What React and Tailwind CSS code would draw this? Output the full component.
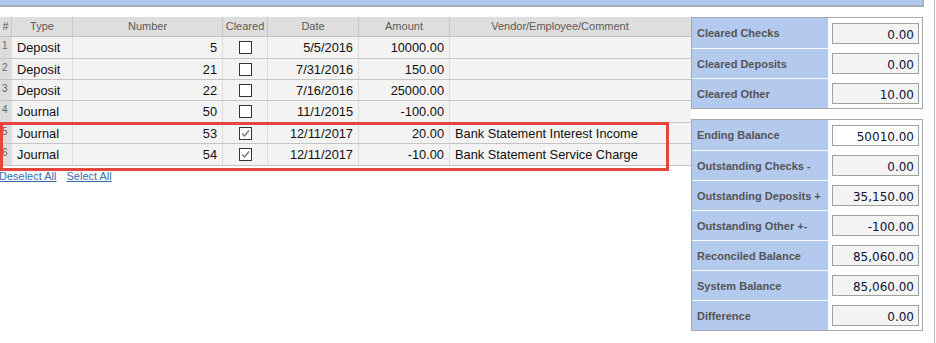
import React from 'react';

const rows = [
    { n: 1, type: 'Deposit', number: '5', cleared: false, date: '5/5/2016', amount: '10000.00', comment: '', h: 'h-[22px]' },
    { n: 2, type: 'Deposit', number: '21', cleared: false, date: '7/31/2016', amount: '150.00', comment: '', h: 'h-[21px]' },
    { n: 3, type: 'Deposit', number: '22', cleared: false, date: '7/16/2016', amount: '25000.00', comment: '', h: 'h-[21px]' },
    { n: 4, type: 'Journal', number: '50', cleared: false, date: '11/1/2015', amount: '-100.00', comment: '', h: 'h-[22px]' },
    { n: 5, type: 'Journal', number: '53', cleared: true, date: '12/11/2017', amount: '20.00', comment: 'Bank Statement Interest Income', h: 'h-[21px]' },
    { n: 6, type: 'Journal', number: '54', cleared: true, date: '12/11/2017', amount: '-10.00', comment: 'Bank Statement Service Charge', h: 'h-[22px]' },
];

const clearedTotals = [
    { label: 'Cleared Checks', value: '0.00' },
    { label: 'Cleared Deposits', value: '0.00' },
    { label: 'Cleared Other', value: '10.00' },
];

const balances = [
    { label: 'Ending Balance', value: '50010.00', editable: true },
    { label: 'Outstanding Checks -', value: '0.00' },
    { label: 'Outstanding Deposits +', value: '35,150.00' },
    { label: 'Outstanding Other +-', value: '-100.00' },
    { label: 'Reconciled Balance', value: '85,060.00' },
    { label: 'System Balance', value: '85,060.00' },
    { label: 'Difference', value: '0.00' },
];

const cols = 'grid grid-cols-[12px_61px_150px_45px_91px_91px_220px]';

const Checkbox = ({ checked }) => (
    <span className="inline-block w-[13px] h-[13px] border border-[#333] bg-white relative">
        {checked && (
            <svg viewBox="0 0 13 13" className="absolute -left-px -top-px w-[13px] h-[13px]">
                <path d="M3 6.5 L5.5 9 L10 3.5" fill="none" stroke="#777" strokeWidth="1.3" />
            </svg>
        )}
    </span>
);

const SummaryBox = ({ items }) => (
    <div className="border border-[#a3a9b0] bg-white">
        {items.map((item, i) => (
            <div key={item.label} className="flex h-[30px]">
                <div className={`w-[136px] bg-[#b3c9ee] pl-[5px] pt-[7px] text-[11px] font-bold text-[#555] ${i > 0 ? 'border-t border-white' : ''}`}>
                    {item.label}
                </div>
                <div className="flex-1 pl-[4px] pt-[5px]">
                    <div className={`w-[87px] h-[21px] border border-[#a0a0a0] pr-[4px] pt-[3px] text-right font-['DejaVu_Sans'] text-[12px] leading-[16px] text-[#10103a] ${item.editable ? 'bg-white' : 'bg-[#f4f4f4]'}`}>
                        {item.value}
                    </div>
                </div>
            </div>
        ))}
    </div>
);

const App = () => {
    return (
        <div className="w-[936px] h-[343px] overflow-hidden bg-white font-['Liberation_Sans',sans-serif]">
            <div className="w-[935px] h-[343px] border-r border-[#b8bcc2]">
                <div className="w-[924px] h-[7px] bg-[#b3c9ee] border-b-2 border-r-2 border-[#a8adb5]" />

                <div className="flex pt-[10px]">
                    <div className="w-[691px] relative">
                        <div className={`${cols} h-[20px] bg-[#dedede] text-[11px] text-[#5a5a5a] border-b border-[#c2c2c2]`}>
                            {['#', 'Type', 'Number', 'Cleared', 'Date', 'Amount', 'Vendor/Employee/Comment'].map((h, i) => (
                                <div key={h} className={`flex items-center justify-center ${i < 6 ? 'border-r border-[#c8c8c8]' : ''}`}>{h}</div>
                            ))}
                        </div>
                        {rows.map((r) => (
                            <div key={r.n} className={`${cols} ${r.h} bg-[#f3f3f3] border-b border-[#c4c4c4] text-[12.8px] text-[#111]`}>
                                <div className="bg-[#dcdcdc] text-[10px] text-[#666] pl-[2px] pt-[1px]">{r.n}</div>
                                <div className="flex items-center pl-[5px] pt-px border-r border-[#dcdcdc]">{r.type}</div>
                                <div className="flex items-center justify-end pr-[5px] pt-px border-r border-[#dcdcdc]">{r.number}</div>
                                <div className="flex items-center justify-center border-r border-[#dcdcdc]"><Checkbox checked={r.cleared} /></div>
                                <div className="flex items-center justify-end pr-[5px] pt-px border-r border-[#dcdcdc]">{r.date}</div>
                                <div className="flex items-center justify-end pr-[5px] pt-px border-r border-[#dcdcdc]">{r.amount}</div>
                                <div className="flex items-center pl-[5px] pt-px">{r.comment}</div>
                            </div>
                        ))}
                        <div className="flex gap-[10px] -ml-px mt-[2px] text-[11px] text-[#3a6cb0] underline">
                            <span>Deselect All</span>
                            <span>Select All</span>
                        </div>

                        <div className="absolute left-0 top-[105px] w-[669px] h-[49px] border-[3px] border-[#e4453d]" />
                    </div>

                    <div className="w-[232px] flex flex-col gap-[10px]">
                        <SummaryBox items={clearedTotals} />
                        <SummaryBox items={balances} />
                    </div>
                </div>
            </div>
        </div>
    );
};

export default App;
